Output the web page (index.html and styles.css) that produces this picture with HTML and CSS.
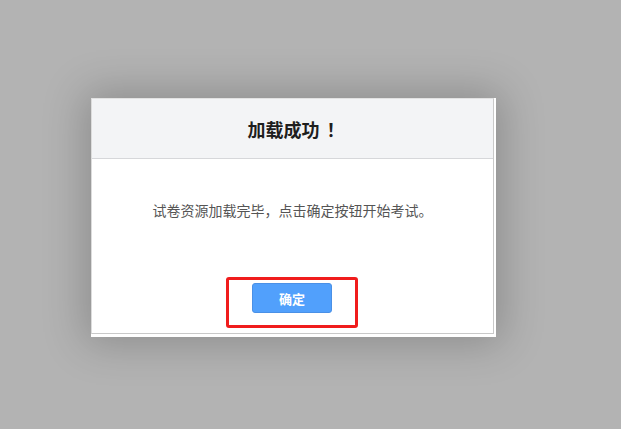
FILE: index.html
```html
<!DOCTYPE html>
<html lang="zh-CN">
<head>
    <meta charset="UTF-8">
    <meta name="viewport" content="width=device-width, initial-scale=1.0">
    <title>加载成功</title>
    <link rel="stylesheet" href="styles.css">
</head>
<body>
    <div class="mask">
        <div class="dialog">
            <div class="dialog-box">
                <div class="dialog-header">
                    <h2>加载成功<span class="bang">！</span></h2>
                </div>
                <div class="dialog-body">
                    <p class="dialog-msg">试卷资源加载完毕，点击确定按钮开始考试。</p>
                    <div class="dialog-footer">
                        <span class="mark-box">
                            <button class="btn-ok">确定</button>
                        </span>
                    </div>
                </div>
            </div>
        </div>
    </div>
</body>
</html>
```

FILE: styles.css
```css
html, body {
    margin: 0;
    height: 100%;
}
body {
    background-color: #b3b3b3;
    font-family: "Liberation Sans", "Noto Sans CJK SC", sans-serif;
    overflow: hidden;
}
.mask {
    padding: 98px 0 0 91px;
}
.dialog {
    width: 403px;
    padding: 0 2px 3px 0;
    background-color: #fff;
    box-shadow: 0 0 40px 6px rgba(0, 0, 0, 0.22);
}
.dialog-box {
    border: 1px solid #c9c9c9;
    border-top-color: #e2e2e2;
    border-left-color: #dcdcdc;
}
.dialog-header {
    height: 59px;
    background-color: #f3f4f6;
    border-bottom: 1px solid #d6d7da;
    display: flex;
    align-items: center;
    justify-content: center;
}
.dialog-header h2 {
    margin: 0;
    font-size: 18px;
    font-weight: bold;
    color: #1e1e1e;
    font-family: "Noto Sans CJK SC", sans-serif;
}
.dialog-header .bang {
    display: inline-block;
    width: 18px;
    padding-left: 7px;
    box-sizing: border-box;
    text-align: left;
}
.dialog-body {
    padding: 41px 0 5px;
    text-align: center;
}
.dialog-msg {
    margin: 0;
    font-size: 14px;
    line-height: 20px;
    color: #555;
    font-family: "Noto Sans CJK SC", sans-serif;
}
.dialog-footer {
    margin-top: 57px;
    padding-right: 1px;
    display: flex;
    justify-content: center;
}
.mark-box {
    display: inline-block;
    border: 3px solid #f01c1c;
    border-radius: 3px;
    padding: 3px 23px 12px;
    line-height: 0;
}
.btn-ok {
    width: 80px;
    height: 30px;
    border: 1px solid #4a90e6;
    border-radius: 3px;
    background-color: #51a0fc;
    color: #fff;
    font-size: 13px;
    font-weight: bold;
    font-family: "Noto Sans CJK SC", sans-serif;
    cursor: pointer;
    padding: 0;
}
```
